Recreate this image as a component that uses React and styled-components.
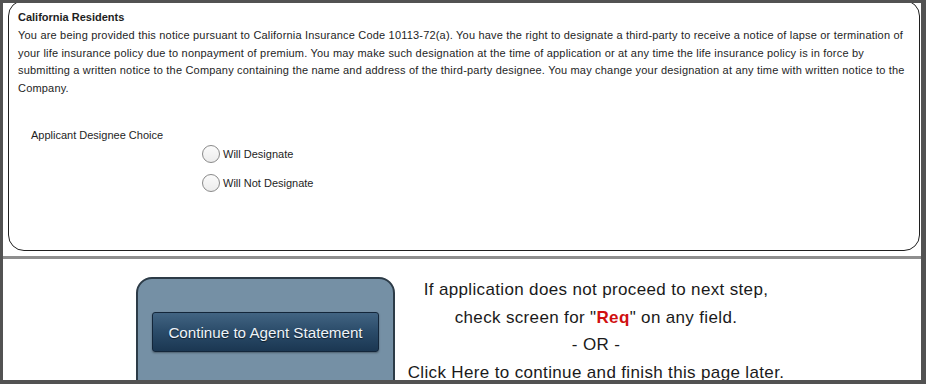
import React from "react";
import styled, { createGlobalStyle } from "styled-components";

const Global = createGlobalStyle`
  html, body {
    margin: 0;
    padding: 0;
    background: #525252;
  }
  body {
    font-family: "Liberation Sans", Arial, sans-serif;
  }
`;

const Frame = styled.div`
  width: 926px;
  height: 384px;
  box-sizing: border-box;
  padding: 3px 5px 4px 3px;
  background: #525252;
`;

const Page = styled.div`
  width: 100%;
  height: 100%;
  background: #fff;
  overflow: hidden;
`;

const Panel = styled.div`
  box-sizing: border-box;
  height: 251px;
  margin: -3px 1px 0 5px;
  padding: 8px 8px 0 9px;
  border: 1.5px solid #1f1f1f;
  border-radius: 16px;
  color: #1e1e1e;
  font-size: 11px;
`;

const Title = styled.div`
  font-weight: bold;
  line-height: 16px;
`;

const Notice = styled.p`
  margin: 2px 0 0;
  line-height: 17.5px;
  letter-spacing: 0.19px;
  white-space: nowrap;
`;

const Question = styled.div`
  margin: 30px 0 0 13px;
  line-height: 16px;
`;

const Choices = styled.div`
  display: flex;
  flex-direction: column;
  gap: 11px;
  margin: 2px 0 0 184px;
`;

const Choice = styled.label`
  display: flex;
  align-items: center;
  gap: 3px;
  line-height: 17px;
`;

const Radio = styled.span`
  box-sizing: border-box;
  width: 18px;
  height: 18px;
  border-radius: 50%;
  border: 1px solid #8a8a8a;
  background: linear-gradient(#fbfbfb, #ececec);
`;

const Divider = styled.div`
  height: 3px;
  margin-top: 5px;
  background: #8e8e8e;
`;

const Footer = styled.div`
  display: flex;
  align-items: flex-start;
  padding: 18px 0 0 133px;
`;

const ButtonBox = styled.div`
  box-sizing: border-box;
  width: 259px;
  height: 130px;
  padding-top: 33px;
  display: flex;
  justify-content: center;
  align-items: flex-start;
  background: #7590a5;
  border: 2px solid #2c3b47;
  border-radius: 16px;
`;

const Button = styled.button`
  width: 227px;
  height: 40px;
  padding: 0;
  border: 1px solid #13263a;
  border-radius: 3px;
  background: linear-gradient(#426482, #2a4b69 50%, #1b3752);
  color: #eef3f8;
  font-family: "Liberation Sans", Arial, sans-serif;
  font-size: 15.2px;
  text-shadow: 0 1px 1px rgba(0, 0, 0, 0.6);
  box-shadow: 0 1px 2px rgba(0, 0, 0, 0.35);
  cursor: pointer;
`;

const Help = styled.div`
  width: 402px;
  margin-top: -1px;
  text-align: center;
  color: #1a1a1a;
  font-size: 17px;
  letter-spacing: 0.35px;
  line-height: 27.5px;
  white-space: nowrap;
`;

const Req = styled.span`
  color: #d01010;
  font-weight: bold;
`;

export default function App() {
  return (
    <>
      <Global />
      <Frame>
        <Page>
          <Panel>
            <Title>California Residents</Title>
            <Notice>
              You are being provided this notice pursuant to California Insurance Code 10113-72(a). You have the right to
              designate a third-party to receive a notice of lapse or termination of
              <br />
              your life insurance policy due to nonpayment of premium. You may make such designation at the time of
              application or at any time the life insurance policy is in force by
              <br />
              submitting a written notice to the Company containing the name and address of the third-party designee. You
              may change your designation at any time with written notice to the
              <br />
              Company.
            </Notice>
            <Question>Applicant Designee Choice</Question>
            <Choices>
              <Choice>
                <Radio />
                Will Designate
              </Choice>
              <Choice>
                <Radio />
                Will Not Designate
              </Choice>
            </Choices>
          </Panel>
          <Divider />
          <Footer>
            <ButtonBox>
              <Button>Continue to Agent Statement</Button>
            </ButtonBox>
            <Help>
              If application does not proceed to next step,
              <br />
              check screen for "<Req>Req</Req>" on any field.
              <br />
              - OR -
              <br />
              Click Here to continue and finish this page later.
            </Help>
          </Footer>
        </Page>
      </Frame>
    </>
  );
}
